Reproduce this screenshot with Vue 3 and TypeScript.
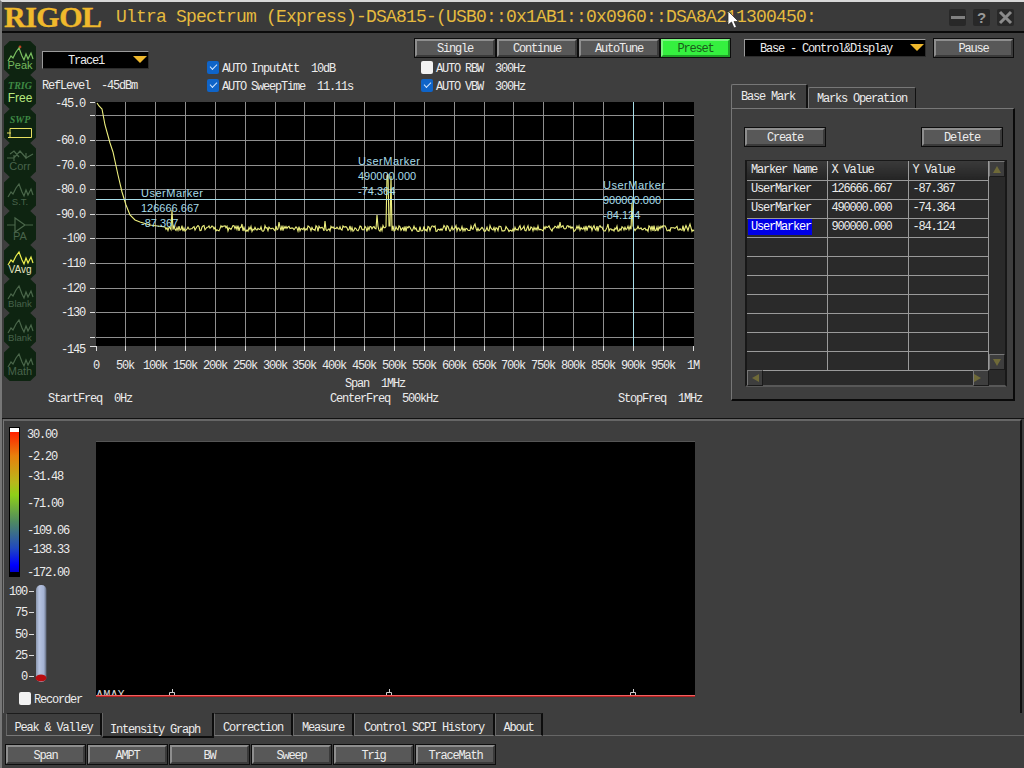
<script setup lang="ts">
import { computed } from 'vue'

interface RailItem { label: string; top?: string; on: boolean; kind: string; narrow?: boolean }
const rail: RailItem[] = [
  { label: 'Peak', on: true, kind: 'peak' },
  { label: 'Free', top: 'TRIG', on: true, kind: 'trig' },
  { label: '', top: 'SWP', on: true, kind: 'swp' },
  { label: 'Corr', on: false, kind: 'corr' },
  { label: 'S.T.', on: false, kind: 'wave', narrow: true },
  { label: 'PA', on: false, kind: 'pa' },
  { label: 'VAvg', on: true, kind: 'vavg' },
  { label: 'Blank', on: false, kind: 'wave', narrow: true },
  { label: 'Blank', on: false, kind: 'wave', narrow: true },
  { label: 'Math', on: false, kind: 'wave' },
]

const gridX = Array.from({ length: 21 }, (_, i) => Math.floor(96 + i * 29.85))
const gridY = [115, 140, 165, 189, 214, 238, 263, 288, 312, 337]
const yLabels: [string, number][] = [
  ['-45.0', 103], ['-60.0', 140], ['-70.0', 165], ['-80.0', 189], ['-90.0', 214],
  ['-100', 238], ['-110', 263], ['-120', 288], ['-130', 312], ['-145', 349],
]
const xLabels = computed(() =>
  gridX.map((x, i) => ({ x, t: i === 0 ? '0' : i === 20 ? '1M' : `${i * 50}k` })),
)

const tracePath = computed(() => {
  const knots: [number, number][] = [
    [97, 103], [99, 106], [102, 109], [105, 125], [110, 143], [113, 152], [118, 175],
    [122, 192], [126, 205], [130, 215], [135, 220], [140, 222], [150, 225], [165, 227],
  ]
  let seed = 11
  const rnd = () => {
    seed = (seed * 1103515245 + 12345) & 0x7fffffff
    return (seed >> 8) / 0x7fffff
  }
  const spikes: Record<number, number> = {
    172: 210, 377: 215, 387: 176, 388: 174, 391: 176, 632: 203, 279: 222, 325: 221,
    560: 222, 475: 224, 242: 224, 690: 224, 608: 224,
  }
  const pts: string[] = []
  knots.forEach(([x, y]) => pts.push(`${x},${y}`))
  for (let x = 166; x <= 694; x += 1) {
    let y = 228.5 + (rnd() - 0.5) * 6
    if (spikes[x] !== undefined) y = spikes[x]
    if (x === 389 || x === 390) y = 226
    pts.push(`${x},${y.toFixed(1)}`)
  }
  return 'M' + pts.join(' L')
})

interface Marker { x: number; y: number; v: string; w: string }
const markers: Marker[] = [
  { x: 141, y: 197, v: '126666.667', w: '-87.367' },
  { x: 358, y: 165, v: '490000.000', w: '-74.364' },
  { x: 603, y: 189, v: '900000.000', w: '-84.124' },
]

const rows = [
  ['UserMarker', '126666.667', '-87.367'],
  ['UserMarker', '490000.000', '-74.364'],
  ['UserMarker', '900000.000', '-84.124'],
  ['', '', ''], ['', '', ''], ['', '', ''], ['', '', ''], ['', '', ''], ['', '', ''], ['', '', ''],
]

const scaleLabels: [string, number][] = [
  ['30.00', 434], ['-2.20', 456], ['-31.48', 476], ['-71.00', 503],
  ['-109.06', 530], ['-138.33', 549], ['-172.00', 572],
]
const thermo: [string, number][] = [['100', 591], ['75', 612], ['50', 634], ['25', 655], ['0', 676]]
const graphTicks = [172, 389, 633]

const bottomTabs = [
  { t: 'Peak & Valley', w: 96, on: false },
  { t: 'Intensity Graph', w: 112, on: true },
  { t: 'Correction', w: 79, on: false },
  { t: 'Measure', w: 61, on: false },
  { t: 'Control SCPI History', w: 141, on: false },
  { t: 'About', w: 48, on: false },
]
const bottomBtns = ['Span', 'AMPT', 'BW', 'Sweep', 'Trig', 'TraceMath']
</script>

<template>
  <div class="app">
    <header class="titlebar">
      <span class="logo">RIGOL</span>
      <span class="title">Ultra Spectrum (Express)-DSA815-(USB0::0x1AB1::0x0960::DSA8A211300450:</span>
      <div class="winbtns">
        <span class="wb"><i class="minus"></i></span>
        <span class="wb q">?</span>
        <span class="wb">
          <svg width="15" height="15" viewBox="0 0 15 15"><path d="M2 2 L13 13 M13 2 L2 13" stroke="#8b8b8b" stroke-width="3" /></svg>
        </span>
      </div>
      <svg class="cursor" width="14" height="20" viewBox="0 0 14 20">
        <path d="M1 1 L1 15 L4.5 12 L7 18 L9.5 17 L7 11.5 L11.5 11.5 Z" fill="#fff" stroke="#222" stroke-width="0.7" />
      </svg>
    </header>

    <section class="top">
      <nav class="rail">
        <div v-for="(r, i) in rail" :key="i" class="rail-item" :class="[r.on ? 'lit' : 'dim', r.kind, { narrow: r.narrow }]">
          <span v-if="r.top" class="rail-top">{{ r.top }}</span>
          <svg v-if="r.kind === 'swp'" width="26" height="11" viewBox="0 0 26 11">
            <path d="M1 10.5 H3 V1.5 H24.5 V10.5 H1" fill="none" stroke="#e8e060" stroke-width="1" />
            <path d="M0 6 L4 6" stroke="#e8e060" />
          </svg>
          <svg v-else-if="r.kind === 'corr'" width="28" height="16" viewBox="0 0 28 16">
            <path d="M1 10 L8 10 L14 3 L20 10 L27 6 M4 6 L8 3 L13 9 M20 5 V11 M8 7 V13" fill="none" stroke-width="1.2" />
          </svg>
          <svg v-else-if="r.kind === 'pa'" width="28" height="19" viewBox="0 0 28 19">
            <path d="M1 10 H9 M9 3 L9 17 L19 10 Z M19 10 H27" fill="none" stroke-width="1.2" />
          </svg>
          <svg v-else-if="r.kind !== 'trig'" width="27" height="18" viewBox="0 0 27 18">
            <circle v-if="r.kind === 'peak'" cx="13" cy="2" r="1.4" fill="#c04020" />
            <path d="M1 16 L4 11 L6 13 L9 7 L12 3 L15 11 L17 15 L19 9 L21 14 L24 8 L26 14" fill="none" stroke-width="1.2" />
          </svg>
          <span v-if="r.label" class="rail-label">{{ r.label }}</span>
        </div>
      </nav>

      <div class="centre">
        <div class="controls">
          <div class="group g1">
            <div class="combo trace">
              <span class="combo-text">Trace1</span>
              <i class="arrow"></i>
            </div>
            <div class="ref"><span class="lbl">RefLevel</span>-45dBm</div>
          </div>
          <div class="group g2">
            <label class="check"><i class="box on"></i><span class="auto">AUTO</span>InputAtt&nbsp;&nbsp;10dB</label>
            <label class="check"><i class="box on"></i><span class="auto">AUTO</span>SweepTime&nbsp;&nbsp;11.11s</label>
          </div>
          <div class="group g3">
            <div class="btnrow">
              <button class="btn">Single</button>
              <button class="btn">Continue</button>
              <button class="btn">AutoTune</button>
              <button class="btn preset">Preset</button>
            </div>
            <div class="checks">
              <label class="check"><i class="box"></i><span class="auto">AUTO</span>RBW&nbsp;&nbsp;300Hz</label>
              <label class="check"><i class="box on"></i><span class="auto">AUTO</span>VBW&nbsp;&nbsp;300Hz</label>
            </div>
          </div>
        </div>

        <svg class="chart" width="665" height="322" viewBox="40 95 665 322">
          <rect x="96" y="102" width="598" height="244" fill="#000" />
          <g stroke="#8f8f8f" stroke-width="1">
            <line v-for="x in gridX.slice(1, 20)" :key="'gx' + x" :x1="x + 0.5" y1="102" :x2="x + 0.5" y2="346" />
            <line v-for="y in gridY" :key="'gy' + y" x1="96" :y1="y + 0.5" x2="694" :y2="y + 0.5" />
          </g>
          <g stroke="#ddd" stroke-width="1">
            <line v-for="y in gridY" :key="'ty' + y" x1="90" :y1="y + 0.5" x2="95" :y2="y + 0.5" />
            <line x1="90" y1="102.5" x2="95" y2="102.5" />
            <line x1="90" y1="346.5" x2="96" y2="346.5" />
            <line v-for="x in gridX" :key="'tx' + x" :x1="x + 0.5" y1="346" :x2="x + 0.5" y2="351" />
          </g>
          <g class="t">
            <text v-for="l in yLabels" :key="l[0]" x="85" :y="l[1] + 4" text-anchor="end">{{ l[0] }}</text>
            <text v-for="l in xLabels" :key="l.t" :x="l.x" y="369" text-anchor="middle">{{ l.t }}</text>
            <text x="345" y="387">Span&nbsp;&nbsp;1MHz</text>
            <text x="48" y="402">StartFreq&nbsp;&nbsp;0Hz</text>
            <text x="330" y="402">CenterFreq&nbsp;&nbsp;500kHz</text>
            <text x="618" y="402">StopFreq&nbsp;&nbsp;1MHz</text>
          </g>
          <path :d="tracePath" fill="none" stroke="#eef07e" stroke-width="1.1" />
          <line x1="96" y1="199.5" x2="694" y2="199.5" stroke="#a8dde8" />
          <line x1="633.5" y1="102" x2="633.5" y2="346" stroke="#a8dde8" />
          <g class="mk">
            <g v-for="m in markers" :key="m.v">
              <text class="mk-name" :x="m.x" :y="m.y">UserMarker</text>
              <text :x="m.x" :y="m.y + 15">{{ m.v }}</text>
              <text :x="m.x" :y="m.y + 30">{{ m.w }}</text>
            </g>
          </g>
        </svg>
      </div>

      <aside class="right">
        <div class="right-top">
          <div class="combo mode">
            <span class="combo-text">Base - Control&amp;Display</span>
            <i class="arrow"></i>
          </div>
          <button class="btn pause">Pause</button>
        </div>
        <div class="tabs">
          <span class="tab active">Base Mark</span>
          <span class="tab">Marks Operation</span>
        </div>
        <div class="pane">
          <div class="pane-btns">
            <button class="btn">Create</button>
            <button class="btn">Delete</button>
          </div>
          <div class="tblwrap">
            <table class="tbl">
              <thead>
                <tr><th>Marker Name</th><th>X Value</th><th>Y Value</th></tr>
              </thead>
              <tbody>
                <tr v-for="(r, i) in rows" :key="i">
                  <td><span :class="{ sel: i === 2 }">{{ r[0] }}</span></td>
                  <td>{{ r[1] }}</td>
                  <td>{{ r[2] }}</td>
                </tr>
              </tbody>
            </table>
            <div class="vscroll">
              <span class="sb"><i class="tri up"></i></span>
              <span class="sb"><i class="tri down"></i></span>
            </div>
            <div class="hscroll">
              <span class="sb"><i class="tri left"></i></span>
              <span class="sb"><i class="tri right"></i></span>
            </div>
          </div>
        </div>
      </aside>
    </section>

    <section class="lower">
      <div class="lower-left">
        <svg class="scale" width="90" height="266" viewBox="0 421 90 266">
          <defs>
            <linearGradient id="cs" x1="0" y1="0" x2="0" y2="1">
              <stop offset="0" stop-color="#ff2000" />
              <stop offset="0.17" stop-color="#e8800c" />
              <stop offset="0.36" stop-color="#b8b81c" />
              <stop offset="0.45" stop-color="#8ed018" />
              <stop offset="0.64" stop-color="#4f8a60" />
              <stop offset="0.83" stop-color="#2048c0" />
              <stop offset="0.95" stop-color="#0000ff" />
              <stop offset="1" stop-color="#0000d0" />
            </linearGradient>
            <linearGradient id="th" x1="0" y1="0" x2="1" y2="0">
              <stop offset="0" stop-color="#8b97ae" />
              <stop offset="0.3" stop-color="#b6c3e0" />
              <stop offset="0.75" stop-color="#a4b2d2" />
              <stop offset="1" stop-color="#5d6678" />
            </linearGradient>
          </defs>
          <rect x="9" y="427" width="11" height="150" fill="#000" />
          <rect x="10" y="428" width="9" height="4" fill="#fff" />
          <rect x="10" y="432" width="9" height="140" fill="url(#cs)" />
          <g class="t">
            <text v-for="l in scaleLabels" :key="l[0]" x="27" :y="l[1] + 4">{{ l[0] }}</text>
            <text v-for="l in thermo" :key="l[0]" x="27" :y="l[1] + 4" text-anchor="end">{{ l[0] }}</text>
          </g>
          <g stroke="#ddd">
            <line v-for="l in thermo" :key="'t' + l[0]" x1="29" :y1="l[1] + 0.5" x2="34" :y2="l[1] + 0.5" />
          </g>
          <rect x="36" y="585" width="10.5" height="97" rx="5" fill="url(#th)" />
          <ellipse cx="41" cy="678" rx="5.5" ry="3.5" fill="#b80d10" />
        </svg>
        <label class="check recorder"><i class="box white"></i>Recorder</label>
      </div>
      <svg class="graph" width="599" height="256" viewBox="96 441 599 256">
        <rect x="96" y="441" width="599" height="255" fill="#000" />
        <line x1="96" y1="441.5" x2="695" y2="441.5" stroke="#555" />
        <text class="amax" x="96" y="699">AMAX</text>
        <g stroke="#cfcfcf">
          <path v-for="x in graphTicks" :key="x" :d="`M${x - 2.5} 695 V692.5 H${x + 2.5} V695 M${x + 0.5} 689 V692`" fill="none" />
        </g>
        <rect x="96" y="695" width="599" height="1" fill="#f06060" />
        <rect x="96" y="696" width="599" height="1" fill="#b02020" />
      </svg>
    </section>

    <div class="btabs">
      <span v-for="t in bottomTabs" :key="t.t" class="btab" :class="{ active: t.on }" :style="{ width: t.w + 'px' }">{{ t.t }}</span>
      <span class="btab-fill"></span>
    </div>
    <div class="bbtns">
      <button v-for="b in bottomBtns" :key="b" class="btn">{{ b }}</button>
    </div>
  </div>
</template>

<style>
html, body { margin: 0; background: #3e3e3e; }
</style>

<style scoped>
.app {
  width: 1024px;
  height: 768px;
  box-sizing: border-box;
  overflow: hidden;
  background: #3e3e3e;
  border-top: 2px solid #d8d8d8;
  border-left: 2px solid #777;
  display: flex;
  flex-direction: column;
  position: relative;
  font: 12px/1 "Liberation Mono", monospace;
  letter-spacing: -1.2px;
  color: #ececec;
}

/* title */
.titlebar {
  height: 29px;
  flex: none;
  display: flex;
  align-items: center;
  border-bottom: 2px solid #0a0a0a;
  position: relative;
  background: #3a3a3a;
}
.logo {
  font: bold 30px/29px "Liberation Serif", serif;
  letter-spacing: -0.5px;
  color: #f0b92c;
  -webkit-text-stroke: 0.4px #f0b92c;
  margin-left: 2px;
  width: 112px;
  flex: none;
}
.title {
  font-size: 18px;
  letter-spacing: -0.8px;
  color: #e6bb3e;
  white-space: nowrap;
  flex: none;
}
.winbtns {
  position: absolute;
  right: 10px;
  top: 7px;
  display: flex;
  gap: 7px;
}
.wb {
  width: 17px;
  height: 17px;
  background: #282828;
  border-radius: 2px;
  display: flex;
  align-items: center;
  justify-content: center;
  color: #9a9a9a;
}
.wb.q { font: bold 15px/1 "Liberation Sans", sans-serif; letter-spacing: 0; }
.minus { width: 14px; height: 3px; background: #808080; display: block; }
.cursor { position: absolute; left: 725px; top: 8px; }

/* top panel */
.top {
  height: 386px;
  flex: none;
  display: flex;
  border-bottom: 1px solid #111;
  box-sizing: border-box;
}
.rail {
  width: 38px;
  flex: none;
  padding: 8px 0 0 2px;
  box-sizing: border-box;
  display: flex;
  flex-direction: column;
}
.rail-item {
  width: 32px;
  height: 34px;
  box-sizing: border-box;
  background: #0e2411;
  clip-path: polygon(18% 0, 82% 0, 100% 16%, 100% 84%, 82% 100%, 18% 100%, 0 84%, 0 16%);
  display: flex;
  flex-direction: column;
  align-items: center;
  justify-content: center;
  font: 11px/11px "Liberation Sans", sans-serif;
  letter-spacing: 0;
}
.rail-item svg { display: block; }
.rail-item.dim { color: #48634b; }
.rail-item.dim svg path { stroke: #4a664a; }
.rail-item.lit { color: #75b85e; }
.rail-item.lit svg path { stroke: #7ac060; }
.rail-item.vavg svg path { stroke: #eef04e; }
.rail-item.vavg .rail-label { color: #e4e4c0; font-size: 10px; }
.rail-item.swp svg path { stroke: #e8e060; }
.rail-item.narrow .rail-label { font-size: 9.5px; }
.rail-label { margin-top: -3px; }
.rail-top {
  font: italic bold 10px/11px "Liberation Serif", serif;
  color: #3f8a45;
  margin-bottom: 2px;
}
.rail-item.trig .rail-label { color: #b6e87c; font-size: 12px; margin-top: 0; }

.centre { width: 691px; flex: none; }
.controls { display: flex; height: 62px; }
.group { box-sizing: border-box; }
.g1 { width: 167px; padding: 18px 0 0 2px; }
.g2 { width: 208px; padding-top: 25px; }
.g3 { flex: 1; padding-top: 6px; }
.combo {
  box-sizing: border-box;
  height: 18px;
  background: #000;
  border: 1px solid;
  border-color: #9a9a9a #2c2c2c #2c2c2c #9a9a9a;
  display: flex;
  align-items: center;
  padding-top: 2px;
  position: relative;
}
.trace { width: 107px; }
.trace .combo-text { padding-left: 25px; }
.mode { width: 182px; }
.mode .combo-text { padding-left: 15px; }
.arrow {
  position: absolute;
  right: 1px;
  top: 4px;
  width: 0;
  height: 0;
  border-left: 7.5px solid transparent;
  border-right: 7.5px solid transparent;
  border-top: 7px solid #eeb72c;
}
.ref { height: 18px; line-height: 18px; margin-top: 8px; }
.lbl { margin-right: 11px; }
.check { display: flex; align-items: flex-start; height: 18px; line-height: 22px; white-space: nowrap; }
.auto { margin-right: 5px; }
.box {
  width: 12px;
  height: 13px;
  border-radius: 2px;
  background: #f2f2f2;
  margin: 3px 3px 0 0;
  flex: none;
  position: relative;
}
.box.on { background: #0f64c8; }
.box.on::after {
  content: "";
  position: absolute;
  left: 2.5px;
  top: 2.5px;
  width: 6px;
  height: 3px;
  border-left: 1.3px solid #cfe5ff;
  border-bottom: 1.3px solid #cfe5ff;
  transform: rotate(-45deg);
}
.btnrow { display: flex; gap: 2px; margin-bottom: 1px; }
.checks { padding-left: 6px; }
.btn {
  box-sizing: border-box;
  width: 80px;
  height: 18px;
  padding: 2px 0 0;
  background: #585858;
  border: 2px solid;
  border-color: #8e8e8e #3a3a3a #3a3a3a #8e8e8e;
  box-shadow: 0 0 0 1px #0d0d0d;
  color: #ececec;
  font: inherit;
  letter-spacing: inherit;
}
.btn.preset { width: 69px; background: #35f03f; border-color: #7cf580 #20a028 #20a028 #7cf580; color: #1a5a1a; }
.chart { display: block; }
.chart .t text, .scale .t text { font: 12px "Liberation Mono", monospace; letter-spacing: -1.2px; fill: #ececec; }
.mk text { font: 11px "Liberation Sans", sans-serif; letter-spacing: 0; fill: #a8dce8; }
.mk .mk-name { letter-spacing: 0.5px; }

/* right */
.right { flex: 1; }
.right-top { display: flex; align-items: flex-start; padding: 6px 0 0 13px; gap: 8px; height: 51px; box-sizing: border-box; }
.pause { width: 79px; }
.tabs { display: flex; align-items: flex-end; height: 24px; margin-left: 0; }
.tab {
  box-sizing: border-box;
  height: 21px;
  width: 108px;
  line-height: 23px;
  text-align: center;
  border: 1px solid #777;
  border-bottom: 0;
  border-radius: 2px 2px 0 0;
  border-right-color: #111;
}
.tab.active { height: 24px; width: 77px; line-height: 25px; border-right: 2px solid #111; padding-right: 2px; }
.pane {
  box-sizing: border-box;
  width: 284px;
  height: 293px;
  border: 1px solid;
  border-color: #777 #0a0a0a #0a0a0a #777;
  border-width: 1px 2px 2px 1px;
  border-top-color: #777;
  padding: 19px 11px 0 13px;
}
.pane-btns { display: flex; justify-content: space-between; }
.tblwrap {
  margin-top: 14px;
  width: 262px;
  height: 227px;
  box-sizing: border-box;
  background: #2a2a2a;
  border: 2px solid #181818;
  border-top-width: 1px;
  border-bottom-color: #585858;
  display: grid;
  grid-template-columns: 242px 16px;
  grid-template-rows: 209px 15px;
}
.tbl {
  border-collapse: collapse;
  table-layout: fixed;
  width: 242px;
  height: 209px;
}
.tbl th, .tbl td {
  height: 19px;
  padding: 0 0 1px 4px;
  text-align: left;
  font-weight: normal;
  box-sizing: border-box;
  border-right: 1px solid #9a9a9a;
  border-bottom: 1px solid #9a9a9a;
  white-space: nowrap;
  overflow: hidden;
}
.tbl th { background: linear-gradient(#3a3a3a, #242424); }
.tbl th:nth-child(1), .tbl td:nth-child(1) { width: 80px; }
.tbl th:nth-child(2), .tbl td:nth-child(2) { width: 81px; }
.sel { background: #0000e6; color: #fff; display: inline-block; line-height: 16px; margin-left: -3px; padding: 0 1px 0 3px; }
.vscroll {
  display: flex;
  flex-direction: column;
  justify-content: space-between;
  height: 209px;
}
.hscroll {
  grid-column: 1;
  display: flex;
  justify-content: space-between;
}
.sb {
  width: 16px;
  height: 16px;
  background: #3e3e3e;
  border: 1px solid;
  border-color: #777 #1a1a1a #1a1a1a #777;
  box-sizing: border-box;
  display: flex;
  align-items: center;
  justify-content: center;
}
.tri { width: 0; height: 0; border: 4px solid transparent; }
.tri.up { border-bottom: 7px solid #6f6a38; border-top: 0; }
.tri.down { border-top: 7px solid #6f6a38; border-bottom: 0; }
.tri.left { border-right: 7px solid #6f6a38; border-left: 0; }
.tri.right { border-left: 7px solid #6f6a38; border-right: 0; }

/* lower */
.lower {
  height: 294px;
  width: 1019px;
  flex: none;
  margin: 0 2px 0 1px;
  box-sizing: border-box;
  border-top: 2px solid #666;
  border-left: 1px solid #777;
  border-right: 2px solid #111;
  display: flex;
  position: relative;
  padding-top: 20px;
}
.lower-left { width: 92px; flex: none; margin-top: -20px; display: flex; flex-direction: column; }
.scale { display: block; margin-left: -4px; flex: none; }
.recorder { margin: 2px 0 0 15px; }
.recorder .box { margin-right: 3px; }
.graph { display: block; }
.amax { font: 12px "Liberation Mono", monospace; fill: #cfcfcf; letter-spacing: 0; }

.btabs {
  display: flex;
  padding-left: 4px;
  height: 24px;
  flex: none;
}
.btab {
  box-sizing: border-box;
  height: 23px;
  line-height: 28px;
  text-align: center;
  border: 1px solid #1c1c1c;
  border-left-color: #666;
  border-right: 2px solid #0d0d0d;
  border-bottom: 1px solid #777;
}
.btab.active { height: 25px; padding: 3px 5px 0 0; border-top: 0; border-bottom: 2px solid #0d0d0d; }
.btab-fill { flex: 1; height: 23px; box-sizing: border-box; border-bottom: 1px solid #666; }
.bbtns {
  display: flex;
  gap: 3px;
  padding: 8px 0 0 4px;
  flex: none;
}
.bbtns .btn { width: 79px; height: 19px; }
</style>
